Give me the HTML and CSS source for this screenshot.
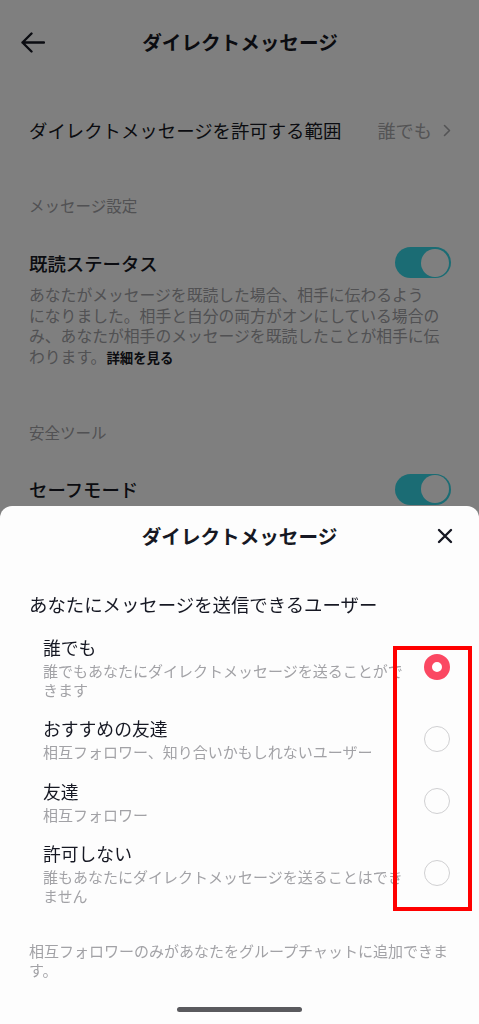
FILE: index.html
```html
<!DOCTYPE html>
<html lang="ja">
<head>
  <meta charset="UTF-8">
  <meta name="viewport" content="width=device-width, initial-scale=1.0">
  <title>ダイレクトメッセージ</title>
  <link rel="stylesheet" href="styles.css">
</head>
<body>

  <!-- Settings page (behind the sheet) -->
  <div class="page">
    <div class="top-bar">
      <svg class="back" width="25" height="21" viewBox="0 0 25 21">
        <path d="M24 10.5H2.5M11.5 1.5L2.5 10.5L11.5 19.5" fill="none" stroke="#161823" stroke-width="2.4" stroke-linecap="round" stroke-linejoin="round"/>
      </svg>
      <h1 class="page-title">ダイレクトメッセージ</h1>
    </div>

    <div class="range-row">
      <span class="range-label">ダイレクトメッセージを許可する範囲</span>
      <span class="range-value">誰でも
        <svg width="8" height="13" viewBox="0 0 8 13">
          <path d="M1.5 1.5L6.5 6.5L1.5 11.5" fill="none" stroke="#a8a8ab" stroke-width="1.6" stroke-linecap="round" stroke-linejoin="round"/>
        </svg>
      </span>
    </div>

    <div class="section-label first">メッセージ設定</div>
    <div class="toggle-row">
      <span class="toggle-label">既読ステータス</span>
      <span class="toggle"><span class="knob"></span></span>
    </div>
    <p class="desc">あなたがメッセージを既読した場合、相手に伝わるよう<br>になりました。相手と自分の両方がオンにしている場合のみ、あなたが相手のメッセージを既読したことが相手に伝わります。<b>詳細を見る</b></p>

    <div class="section-label second">安全ツール</div>
    <div class="toggle-row">
      <span class="toggle-label">セーフモード</span>
      <span class="toggle"><span class="knob"></span></span>
    </div>
  </div>

  <div class="overlay"></div>

  <!-- Bottom sheet -->
  <div class="sheet">
    <div class="sheet-head">
      <span></span>
      <h2 class="sheet-title">ダイレクトメッセージ</h2>
      <svg class="close" width="16" height="16" viewBox="0 0 16 16">
        <path d="M2 2L14 14M14 2L2 14" fill="none" stroke="#161823" stroke-width="2.4" stroke-linecap="round"/>
      </svg>
    </div>

    <div class="sheet-question">あなたにメッセージを送信できるユーザー</div>

    <div class="options">
      <div class="option">
        <div class="option-text">
          <div class="option-title">誰でも</div>
          <div class="option-sub">誰でもあなたにダイレクトメッセージを送ることができます</div>
        </div>
        <span class="radio checked"></span>
      </div>
      <div class="option">
        <div class="option-text">
          <div class="option-title">おすすめの友達</div>
          <div class="option-sub">相互フォロワー、知り合いかもしれないユーザー</div>
        </div>
        <span class="radio"></span>
      </div>
      <div class="option">
        <div class="option-text">
          <div class="option-title">友達</div>
          <div class="option-sub">相互フォロワー</div>
        </div>
        <span class="radio"></span>
      </div>
      <div class="option">
        <div class="option-text">
          <div class="option-title">許可しない</div>
          <div class="option-sub">誰もあなたにダイレクトメッセージを送ることはできません</div>
        </div>
        <span class="radio"></span>
      </div>
    </div>

    <p class="sheet-note">相互フォロワーのみがあなたをグループチャットに追加できます。</p>

    <div class="home-bar"></div>

    <!-- annotation box -->
    <div class="highlight"></div>
  </div>

</body>
</html>
```

FILE: styles.css
```css
body {
  margin: 0;
  padding: 0;
  width: 479px;
  height: 1024px;
  overflow: hidden;
  background-color: #fff;
  color: #161823;
  font-family: "Noto Sans CJK JP", "Noto Sans", sans-serif;
}

/* Settings page */
.page {
  padding: 0 28px 0 29px;
}

.top-bar {
  position: relative;
  height: 84px;
  display: flex;
  align-items: center;
  justify-content: center;
}

.back {
  position: absolute;
  left: -9px;
  top: 32px;
}

.page-title,
.sheet-title {
  margin: 0;
  font-size: 19.6px;
  font-weight: 700;
  line-height: 26px;
}

.range-row {
  margin-top: 16px;
  height: 60px;
  display: flex;
  align-items: center;
  justify-content: space-between;
}

.range-label {
  font-size: 18.4px;
  line-height: 26px;
}

.range-value {
  display: flex;
  align-items: center;
  gap: 11px;
  font-size: 18.2px;
  color: #a8a8ab;
}

.section-label {
  font-size: 15.5px;
  line-height: 20px;
  color: #a2a2a6;
}

.section-label.first {
  margin-top: 35px;
}

.section-label.second {
  margin-top: 54px;
}

.toggle-row {
  margin-top: 32px;
  height: 31px;
  display: flex;
  align-items: center;
  justify-content: space-between;
}

.toggle-label {
  font-size: 18.4px;
  font-weight: 500;
}

.toggle {
  width: 56px;
  height: 31px;
  box-sizing: border-box;
  padding: 1.5px 2px;
  border-radius: 16px;
  background-color: #37d9e8;
  display: flex;
  justify-content: flex-end;
}

.knob {
  width: 28px;
  height: 28px;
  border-radius: 50%;
  background-color: #fff;
}

.desc {
  margin: 7px 0 0;
  width: 418px;
  font-size: 15.8px;
  line-height: 20.7px;
  color: #a2a2a6;
}

.desc b {
  font-size: 13.4px;
  line-height: 1;
  font-weight: 700;
  color: #161823;
}

/* Dim layer */
.overlay {
  position: fixed;
  top: 0;
  left: 0;
  width: 100%;
  height: 100%;
  background-color: rgba(0, 0, 0, 0.5);
}

/* Bottom sheet */
.sheet {
  position: absolute;
  left: 0;
  right: 0;
  bottom: 0;
  height: 518px;
  background-color: #fdfdfd;
  border-radius: 12px 12px 0 0;
  display: flex;
  flex-direction: column;
}

.sheet-head {
  height: 60px;
  display: grid;
  grid-template-columns: 1fr auto 1fr;
  align-items: center;
}

.close {
  justify-self: end;
  margin-right: 26px;
}

.sheet-question {
  margin-top: 25px;
  padding-left: 29px;
  font-size: 18.4px;
  line-height: 26px;
}

.options {
  margin-top: 17.5px;
  display: flex;
  flex-direction: column;
  gap: 17.5px;
}

.option {
  display: flex;
  align-items: center;
  padding: 0 29px 0 43px;
}

.option-text {
  width: 362px;
  margin-right: 19px;
}

.option-title {
  font-size: 17.8px;
  line-height: 24px;
}

.option-sub {
  margin-top: 2px;
  font-size: 15px;
  line-height: 19px;
  color: #a2a2a6;
}

.radio {
  width: 26px;
  height: 26px;
  box-sizing: border-box;
  border-radius: 50%;
  border: 1.5px solid #cfcfd1;
}

.radio.checked {
  border: 8px solid #fb4862;
  background-color: #fff;
}

.sheet-note {
  margin: 35.5px 0 0;
  padding: 0 27px 0 29px;
  font-size: 15px;
  line-height: 19px;
  color: #a2a2a6;
}

.home-bar {
  margin: auto auto 12px;
  width: 125px;
  height: 5px;
  border-radius: 3px;
  background-color: #5a5a5e;
}

.highlight {
  position: absolute;
  left: 393px;
  top: 140px;
  width: 71px;
  height: 257px;
  border: 4px solid #ff0000;
}
```
